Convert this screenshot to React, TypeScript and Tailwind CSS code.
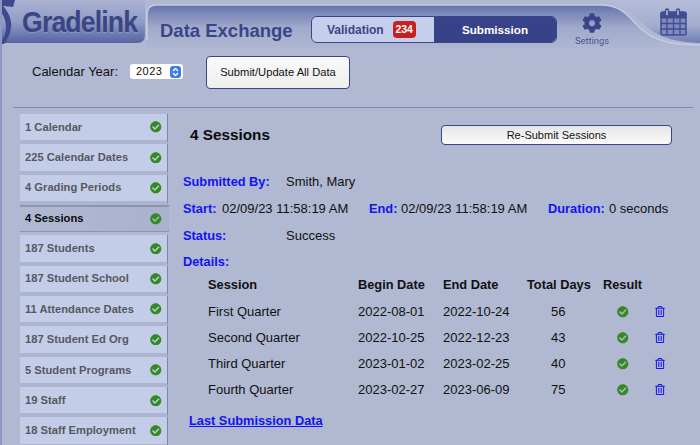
import { FaCheckCircle, FaCog, FaRegTrashAlt } from "react-icons/fa";

const items = ["1 Calendar","225 Calendar Dates","4 Grading Periods","4 Sessions","187 Students","187 Student School","11 Attendance Dates","187 Student Ed Org","5 Student Programs","19 Staff","18 Staff Employment"];
const rows = [
  ["First Quarter","2022-08-01","2022-10-24","56"],
  ["Second Quarter","2022-10-25","2022-12-23","43"],
  ["Third Quarter","2023-01-02","2023-02-25","40"],
  ["Fourth Quarter","2023-02-27","2023-06-09","75"],
];

function HeaderArt() {
  return (
    <svg className="absolute left-0 top-0" width="700" height="50" viewBox="0 0 700 50">
      <defs>
        <linearGradient id="l" x1="0" y1="0" x2="0" y2="1">
          <stop offset="0" stopColor="#aab2d2" />
          <stop offset="0.5" stopColor="#929dc6" />
          <stop offset="1" stopColor="#5663a2" />
        </linearGradient>
        <linearGradient id="r" x1="0" y1="0" x2="0" y2="1">
          <stop offset="0" stopColor="#6673ab" />
          <stop offset="0.5" stopColor="#a0aacb" />
          <stop offset="1" stopColor="#b0b8d2" />
        </linearGradient>
        <linearGradient id="w" x1="0" y1="0" x2="0" y2="1">
          <stop offset="0" stopColor="#b4bcd8" />
          <stop offset="0.6" stopColor="#a3adcf" />
          <stop offset="1" stopColor="#6f7cb1" />
        </linearGradient>
      </defs>
      <rect width="700" height="50" fill="#b0b8d2" />
      <path d="M0 0H145V35Q145 43 137 43H0Z" fill="url(#l)" />
      <path d="M147 40V14Q147 5 157 5H600C622 5 628 16 640 28C655 42 675 45 700 45V50H147Z" fill="url(#r)" />
      <path d="M147 40V14Q147 5 157 5H600C622 5 628 16 640 28C655 42 675 45 700 45" fill="none" stroke="#c4cbe2" strokeWidth="1.5" />
      <path d="M600 0H700V43C680 42 662 40 646 26C630 12 626 3 600 3Z" fill="url(#w)" />
      <path d="M2 5C9 12 12 20 11 28C10 35 7 40 4 44H0C4 38 6 33 6 27C6 20 3 14 0 11V5Z" fill="#3d4a8c" />
      <path d="M0 0H15L13 7L4 6H0Z" fill="#3d4a8c" />
      <path d="M0 51V50Q0 45 8 45H20V51Z" fill="#b0b8d2" />
    </svg>
  );
}

function CalendarIcon() {
  return (
    <svg width="27" height="28" viewBox="0 0 27 28" fill="none" stroke="#414c92">
      <rect x="1" y="4" width="25" height="23" rx="2" strokeWidth="1.5" fill="#7f8bbd" />
      <path d="M1 4.5h25v5.5H1z" fill="#414c92" />
      <path d="M1 15.5h25M1 21h25M7 10v17M13.5 10v17M20 10v17" strokeWidth="1.3" />
      <rect x="5.5" y="1" width="3" height="7" rx="1.5" fill="#a9b2d2" strokeWidth="1.3" />
      <rect x="16.5" y="1" width="3" height="7" rx="1.5" fill="#a9b2d2" strokeWidth="1.3" />
    </svg>
  );
}

export default function App() {
  return (
    <div className="w-[700px] h-[445px] overflow-hidden flex flex-col bg-[#b0b8d2] font-['Liberation_Sans',Arial,sans-serif] text-[#111] border-l-[2px] border-[#8e99c3]">
      {/* header */}
      <div className="relative h-[45px] shrink-0 -ml-[2px] w-[700px]">
        <HeaderArt />
        <div className="relative flex items-start h-full">
          <div className="w-[160px] pl-[22px] pt-[5px]">
            <span className="block origin-left scale-x-[0.89] text-[30px] leading-[34px] font-bold tracking-[-1px] text-[#3a4684] [text-shadow:0_1px_1px_#8a94c0]">Gradelink</span>
          </div>
          <div className="w-[151px] pt-[20px] text-[18.5px] leading-[21px] font-bold text-[#3a4488]">Data Exchange</div>
          <div className="mt-[16px] flex h-[27px] w-[246px] rounded-[6px] overflow-hidden border border-[#3a4488]">
            <div className="w-[122px] bg-[#c5cfeb] flex items-center pl-[15px] text-[12px] font-bold text-[#3a4488]">
              <span>Validation</span>
              <span className="ml-[9px] w-[23px] h-[17px] rounded-[4px] bg-[#c8201e] text-white text-[10.5px] flex items-center justify-center">234</span>
            </div>
            <div className="flex-1 bg-[#384289] text-white flex items-center justify-center text-[11.7px] font-bold">Submission</div>
          </div>
          <div className="ml-[13px] w-[44px] pt-[13px] flex flex-col items-center text-[#3a4488]">
            <FaCog className="w-[20px] h-[20px]" />
            <span className="text-[9.3px] leading-[11px] mt-[2px] font-['Roboto',sans-serif] text-[#4a5596]">Settings</span>
          </div>
          <div className="ml-[46px] pt-[8px]"><CalendarIcon /></div>
        </div>
      </div>

      {/* toolbar */}
      <div className="flex items-start h-[62px] shrink-0 pl-[30px] pt-[11px]">
        <span className="text-[13px] leading-[32px] w-[98px]">Calendar Year:</span>
        <div className="mt-[8px] w-[53px] h-[15px] bg-white rounded-[3px] flex items-center justify-between pl-[6px] pr-[2px] text-[11px] tracking-[0.5px]">
          <span>2023</span>
          <span className="w-[11px] h-[12px] rounded-[3px] bg-[#3b7ce8] flex flex-col items-center justify-center">
            <svg width="7" height="10" viewBox="0 0 7 10" fill="none" stroke="#fff" strokeWidth="1.3"><path d="M1 4L3.5 1.5L6 4M1 6L3.5 8.5L6 6" /></svg>
          </span>
        </div>
        <button className="ml-[23px] w-[144px] h-[33px] rounded-[4px] border border-[#3a4488] bg-gradient-to-b from-[#fafafa] to-[#eeeeee] text-[11.2px] text-[#111]">Submit/Update All Data</button>
      </div>

      {/* rule */}
      <div className="ml-[11px] w-[680px] h-px bg-[#7d86a6] shrink-0" />

      {/* body */}
      <div className="flex flex-1 min-h-0">
        <div className="ml-[18px] w-[148px] shrink-0 flex flex-col pt-[6px]">
          {items.map((t, i) => {
            const active = i === 3;
            return active ? (
              <div key={t} className="h-[30.35px] shrink-0">
                <div className="h-[26.5px] mr-[-1px] flex items-center justify-between px-[5px] text-[11.2px] font-bold text-[#0a0a0a] bg-gradient-to-r from-[#b0b8d2] to-[#a9b1cc] border-t-2 border-b border-[#8b94b4]">
                  <span>{t}</span>
                  <FaCheckCircle className="w-[11.5px] h-[11.5px] mr-[2.5px] text-[#338a22]" />
                </div>
              </div>
            ) : (
              <div key={t} className="h-[30.35px] shrink-0 flex items-center justify-between pl-[5px] pr-[5.5px] text-[11.2px] font-bold text-[#55595f] bg-[#c4cde8] border-b-[4px] border-b-[#acb4cf] border-r border-r-[#7d86a6]">
                <span>{t}</span>
                <FaCheckCircle className="w-[11.5px] h-[11.5px] text-[#338a22]" />
              </div>
            );
          })}
        </div>

        <div className="flex-1 pl-[15px] min-w-0">
          <div className="flex items-center h-[36px] mt-[9px]">
            <h1 className="ml-[7px] w-[251px] text-[15.3px] font-bold text-[#0a0a0a]">4 Sessions</h1>
            <button className="w-[231px] h-[20px] rounded-[4px] border border-[#3a4488] bg-gradient-to-b from-[#e6e6e6] to-[#fafafa] text-[11px] text-[#111]">Re-Submit Sessions</button>
          </div>

          <div className="mt-[16px] text-[13px] leading-[16px]">
            <div className="flex h-[26.67px] items-center">
              <span className="w-[103px] text-[12.8px] font-bold text-[#1414f0]">Submitted By:</span><span>Smith, Mary</span>
            </div>
            <div className="flex h-[26.67px] items-center">
              <span className="w-[39px] text-[12.8px] font-bold text-[#1414f0]">Start:</span>
              <span className="w-[147px]">02/09/23 11:58:19 AM</span>
              <span className="w-[32px] text-[12.8px] font-bold text-[#1414f0]">End:</span>
              <span className="w-[147px]">02/09/23 11:58:19 AM</span>
              <span className="w-[61px] text-[12.8px] font-bold text-[#1414f0]">Duration:</span>
              <span>0 seconds</span>
            </div>
            <div className="flex h-[26.67px] items-center">
              <span className="w-[103px] text-[12.8px] font-bold text-[#1414f0]">Status:</span><span>Success</span>
            </div>
            <div className="h-[23px] pt-[5px] text-[12.8px] font-bold text-[#1414f0]">Details:</div>
          </div>

          <div className="ml-[25px] w-[470px] grid grid-cols-[150px_85px_84px_76px_75px] text-[13px] mt-[1px]">
            <div className="h-[26px] pt-[2px] text-[12.8px] font-bold">Session</div>
            <div className="h-[26px] pt-[2px] text-[12.8px] font-bold">Begin Date</div>
            <div className="h-[26px] pt-[2px] text-[12.8px] font-bold">End Date</div>
            <div className="h-[26px] pt-[2px] text-[12.8px] font-bold">Total Days</div>
            <div className="h-[26px] pt-[2px] text-[12.8px] font-bold">Result</div>
            {rows.map((r) => (
              <div key={r[0]} className="contents">
                <div className="h-[26px] flex items-center">{r[0]}</div>
                <div className="h-[26px] flex items-center">{r[1]}</div>
                <div className="h-[26px] flex items-center">{r[2]}</div>
                <div className="h-[26px] flex items-center pl-[24px]">{r[3]}</div>
                <div className="h-[26px] flex items-center pl-[14px] gap-[26px]">
                  <FaCheckCircle className="w-[11.5px] h-[11.5px] text-[#338a22]" />
                  <FaRegTrashAlt className="w-[10px] h-[11px] text-[#1414f0]" />
                </div>
              </div>
            ))}
          </div>

          <a className="block ml-[6px] mt-[8px] text-[12.8px] font-bold text-[#1414f0] underline">Last Submission Data</a>
        </div>
      </div>
    </div>
  );
}
